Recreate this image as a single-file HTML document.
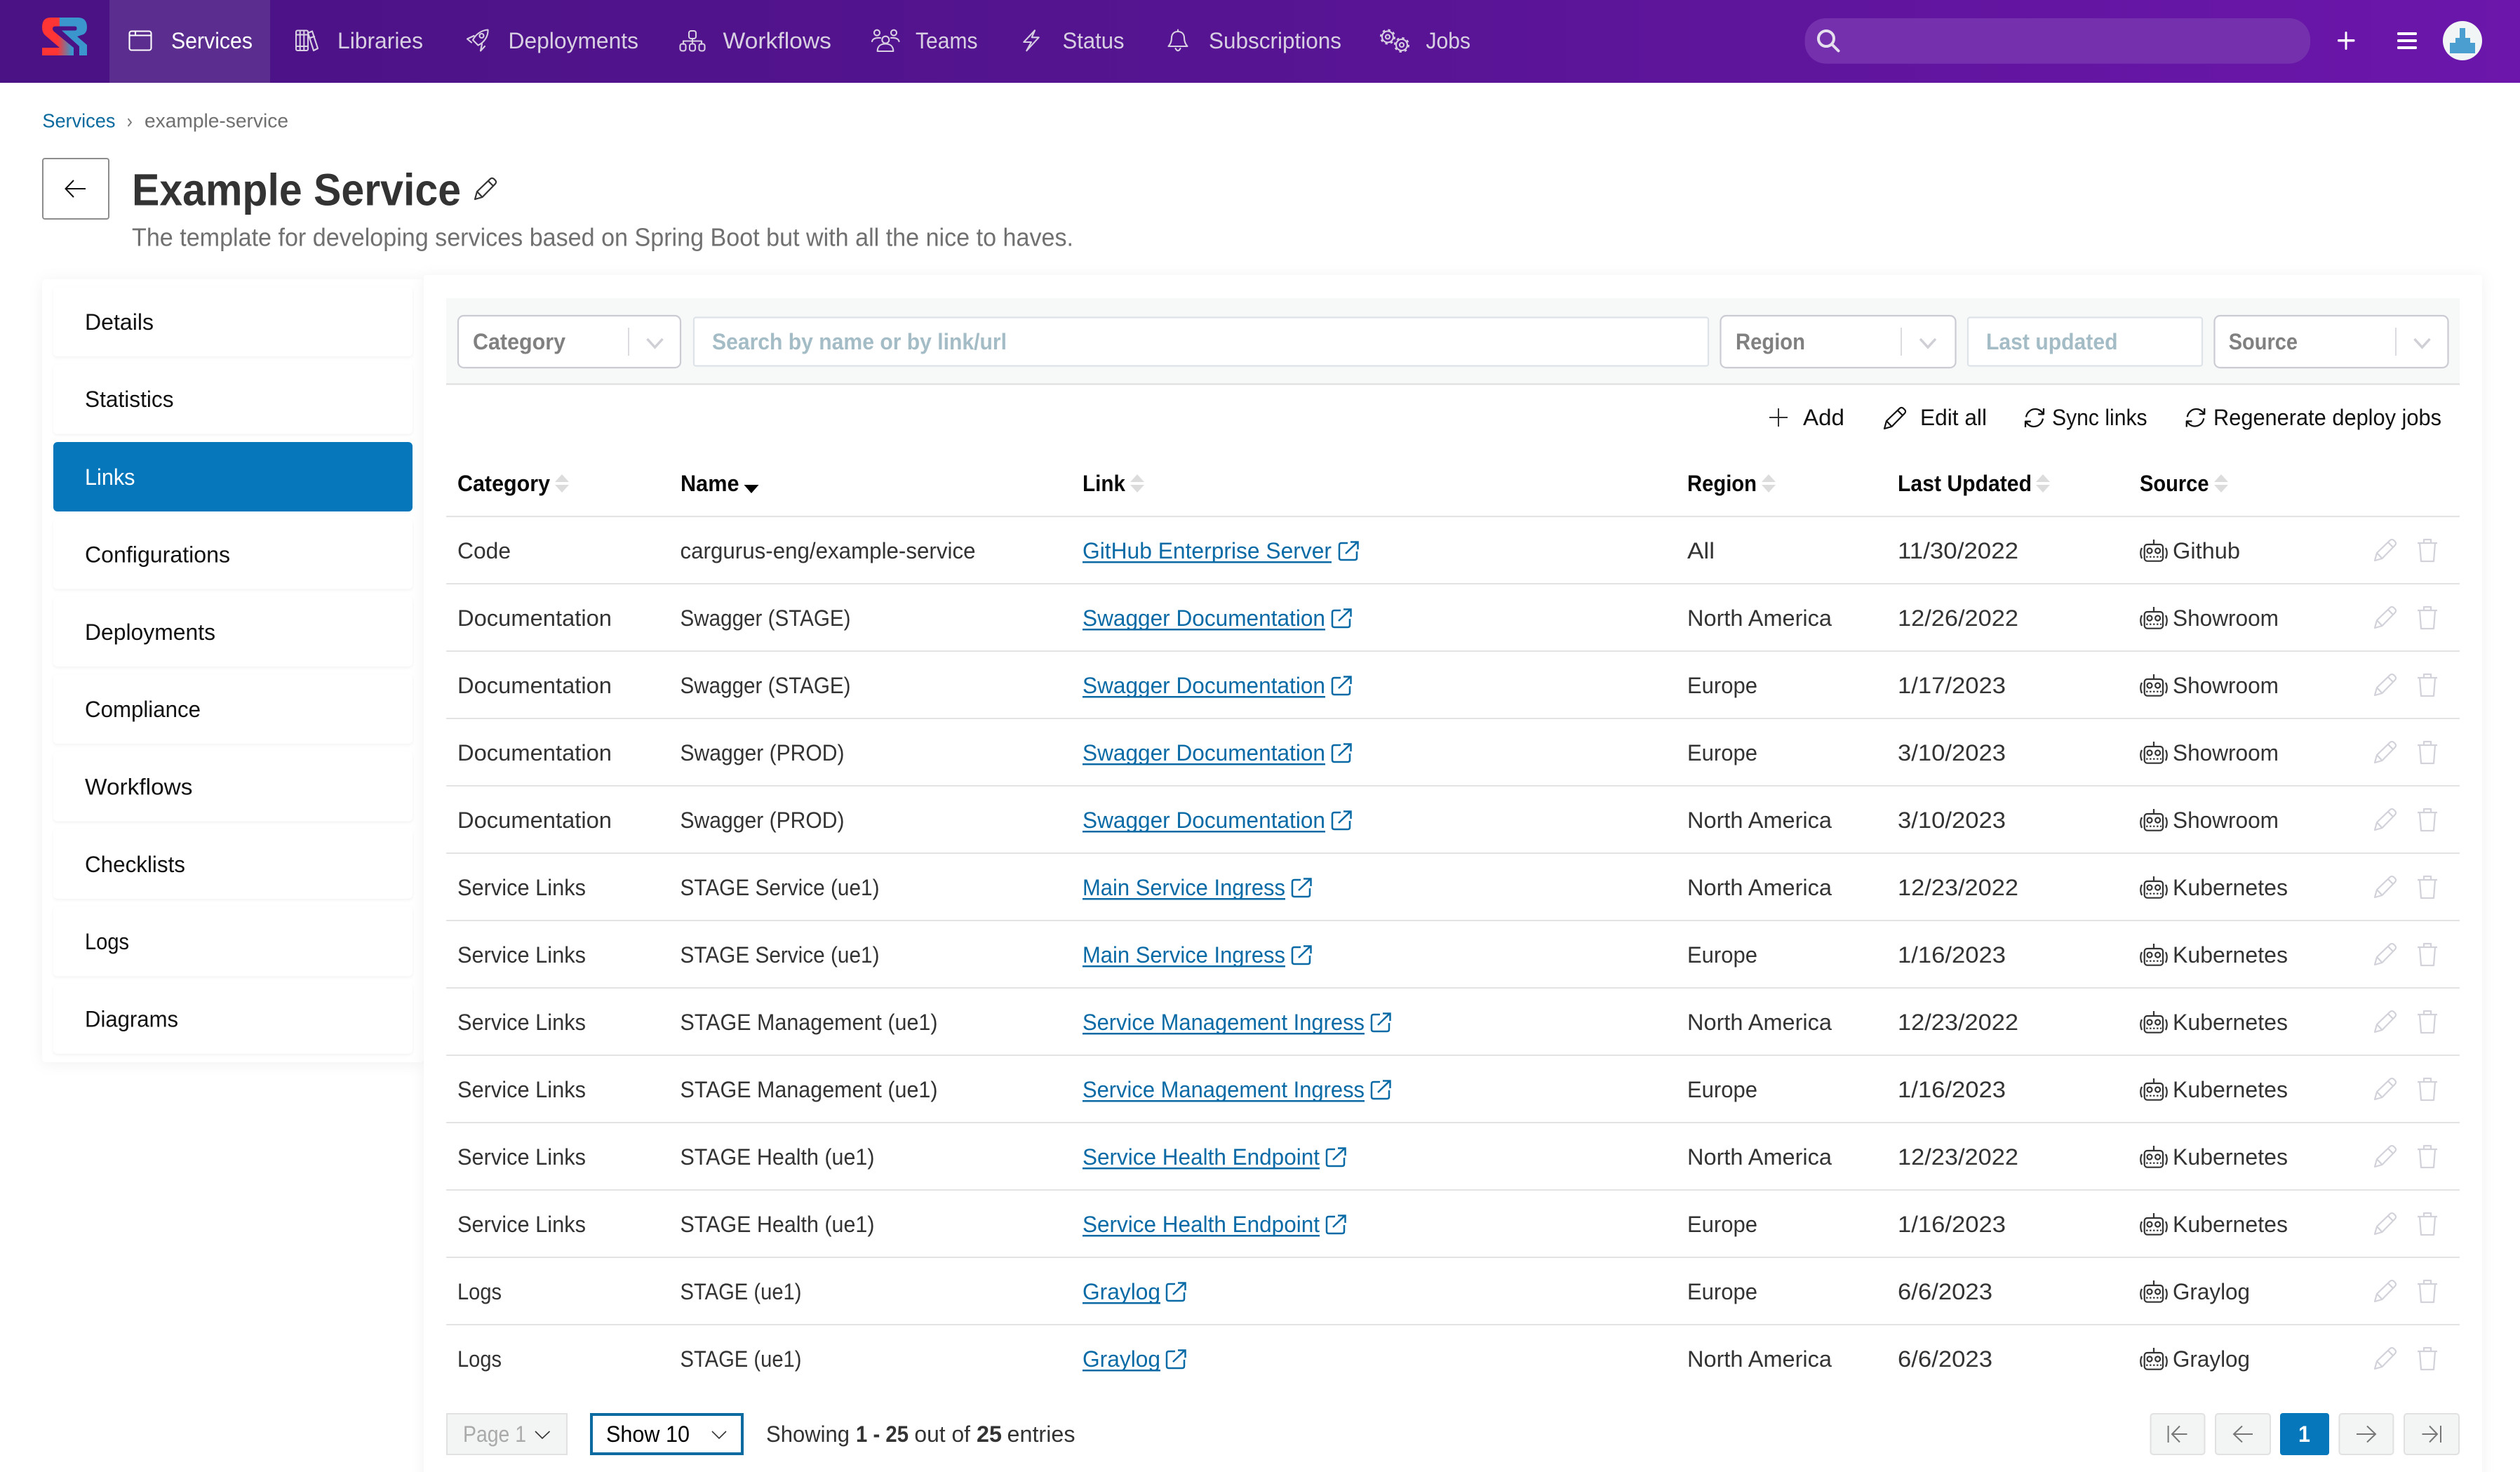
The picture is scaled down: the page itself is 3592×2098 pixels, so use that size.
<!DOCTYPE html>
<html lang="en"><head><meta charset="utf-8"><title>Example Service</title>
<style>
html,body{margin:0;padding:0;background:#fff;width:3592px;height:2098px;overflow:hidden}
svg{display:block}
text{font-family:"Liberation Sans",sans-serif;font-size:32px;fill:#333;white-space:pre}
.nav{fill:#d8d0e2}
.b{font-weight:700}
.hd{font-weight:700;fill:#0a0a0a}
.side{fill:#111}
.lnk{fill:#0a6aa6}
.f{font-weight:700;fill:#808080}
.ph{font-weight:700;fill:#a3bcc6}
.tb{fill:#111}
.i{fill:none;stroke:#d8d0e2;stroke-width:2.1;stroke-linecap:round;stroke-linejoin:round}
svg g[transform] text,.side,.tb,.sl{transform:translateY(-1px)}
</style></head><body>
<svg xmlns="http://www.w3.org/2000/svg" width="3592" height="2098" viewBox="0 0 3592 2098">
<defs>
<linearGradient id="hg" x1="0" x2="1" y1="0" y2="0"><stop offset="0" stop-color="#4a1284"/><stop offset=".5" stop-color="#561492"/><stop offset="1" stop-color="#6c16ab"/></linearGradient>
<linearGradient id="lg" gradientUnits="userSpaceOnUse" x1="82" x2="102" y1="0" y2="0"><stop offset="0" stop-color="#ff3434"/><stop offset="1" stop-color="#3a96cc"/></linearGradient>
<filter id="s1" x="-5%" y="-5%" width="110%" height="110%"><feDropShadow dx="0" dy="2" stdDeviation="10" flood-color="#000" flood-opacity=".055"/></filter>
<filter id="s2" x="-5%" y="-20%" width="110%" height="140%"><feDropShadow dx="0" dy="2" stdDeviation="2" flood-color="#000" flood-opacity=".05"/></filter>
<symbol id="pen" viewBox="0 0 32 32" overflow="visible"><path fill="none" stroke-width="2.2" stroke-linejoin="round" d="M1 31 L4 20 L23 1.8 C24.5 .6 26.5 .6 28 2 L30 4 C31.4 5.5 31.4 7.5 30 9 L11.5 28 Z M4 20 L11.5 28 M20 5 L27 12"/></symbol>
<symbol id="ref" viewBox="0 0 28 26" overflow="visible"><path fill="none" stroke="#111" stroke-width="2.2" stroke-linejoin="round" d="M2.5 12 C3.5 5 9.5 1 15 1 C20 1 24 4 26 8 M26.500 0 V8 H19 M25.500 14 C24.500 21 18.500 25 13 25 C8 25 4 22 2 18 M1.500 26 V18 H9"/></symbol>
<g id="sort" fill="#dcdcdc"><path d="M10 0 L20 11 H0 Z M0 15 H20 L10 26 Z"/></g>
<g id="chev"><path fill="none" stroke="#cfcfd6" stroke-width="3.500" d="M1 1 L12 13 L23 1"/></g>
<g id="ext"><path fill="none" stroke="#0a6aa6" stroke-width="2.500" stroke-linejoin="round" d="M12 -23 H3 Q0 -23 0 -20 V-2 Q0 1 3 1 H22 Q25 1 25 -2 V-11"/><path fill="none" stroke="#0a6aa6" stroke-width="2.500" d="M9 -8 L26 -24.500 M16 -24.500 H26.500 V-14"/></g>
<g id="act">
<g fill="none" stroke="#333" stroke-width="2.200"><rect x="3056.700" y="-21" width="26.300" height="23.700" rx="4"/><path d="M3070 -28 V-21"/><circle cx="3064" cy="-12" r="3.500"/><circle cx="3075.600" cy="-12" r="3.500"/><path d="M3059 -3.300 H3081" stroke-dasharray="2.500 2.500"/><path d="M3053 -16 Q3049.500 -9 3053 -1 M3087 -16 Q3090.500 -9 3087 -1"/></g>
<use href="#pen" x="3384" y="-29" width="32" height="32" stroke="#d2d2da"/>
<path fill="none" stroke="#d2d2da" stroke-width="2.200" stroke-linejoin="round" d="M3446 -23 H3474 M3455 -23 V-28 H3465 V-23 M3449 -23 L3451 3 H3469 L3471 -23"/>
</g>
</defs>

<rect width="3592" height="2098" fill="#fff"/>
<!-- header -->
<rect width="3592" height="118" fill="url(#hg)"/>
<rect x="156" width="229" height="118" fill="#5b2d8e"/>
<path fill="url(#lg)" d="M72 25 H100 V37.500 H79 Q75 37.500 75 41 Q75 43 77 45 L105 68 V79 H60 V68 H85 L64 50 Q60 46 60 39 Q60 25 72 25 Z"/>
<path fill="#3a96cc" d="M100 25 H111 Q124 25 124 39 Q124 46 119 49 L110 52 L124 64 V79 H113 V66 L88 43.500 H107 Q109.500 43.500 109.500 40.500 Q109.500 37.500 107 37.500 H85 V25 Z"/>

<!-- nav -->
<g class="i" style="stroke:#fff"><rect x="184.500" y="44.500" width="31" height="27" rx="3"/><path d="M185 50.500 H215 M193 45 V50.500"/></g>
<text x="244" y="69" fill="#fff" style="fill:#fff" textLength="116" lengthAdjust="spacingAndGlyphs">Services</text>
<g class="i"><rect x="422" y="43.500" width="17" height="28.500" rx="2"/><path d="M427.700 44 V72 M433.300 44 V72 M422 49.500 H439 M422 66 H439 M439 47 L445 44.500 L453 69 L447 72 Z M442 54 L448 52"/></g>
<text class="nav" x="481" y="69" textLength="122" lengthAdjust="spacingAndGlyphs">Libraries</text>
<g class="i"><path d="M695.500 42.500 C686 43 678 49 674 57 L681.500 64.500 C690 60.500 696 52 695.500 42.500 Z M675.500 51 L666 55.500 L672 60.500 M687 62.500 L685 72.500 L691 66"/><circle cx="686.500" cy="51" r="3"/></g>
<text class="nav" x="724.500" y="69" textLength="185.500" lengthAdjust="spacingAndGlyphs">Deployments</text>
<g class="i"><rect x="982" y="44" width="10" height="11" rx="3"/><path d="M987 55 V61 M974 63 V58.500 H1000 V63"/><rect x="969.500" y="62.500" width="8" height="10" rx="3"/><rect x="983" y="62.500" width="8" height="10" rx="3"/><rect x="996.500" y="62.500" width="8" height="10" rx="3"/></g>
<text class="nav" x="1030.500" y="69" textLength="154.500" lengthAdjust="spacingAndGlyphs">Workflows</text>
<g class="i"><circle cx="1250" cy="46.700" r="4"/><circle cx="1274" cy="46.700" r="4"/><circle cx="1262.300" cy="56.700" r="5"/><path d="M1250.700 73 C1250.700 66 1255 62.500 1262 62.500 C1269 62.500 1273.300 66 1273.300 73 Z M1243 59 C1244 55 1248 53.500 1255 54 M1281.500 59 C1280.500 55 1276.500 53.500 1270 54"/></g>
<text class="nav" x="1305" y="69" textLength="88.500" lengthAdjust="spacingAndGlyphs">Teams</text>
<path class="i" d="M1475 43.300 L1459.300 60 H1470 L1463.300 72.300 L1480.700 53.300 H1470.700 Z"/>
<text class="nav" x="1514.500" y="69" textLength="88" lengthAdjust="spacingAndGlyphs">Status</text>
<g class="i"><path d="M1679 42.500 V45 M1665.500 66 C1669 62 1670 57 1670 54 C1670 48 1674 45 1679 45 C1684 45 1688 48 1688 54 C1688 57 1689 62 1692.500 66 Z M1675.500 69 Q1679 75.500 1682.500 69"/></g>
<text class="nav" x="1723" y="69" textLength="189" lengthAdjust="spacingAndGlyphs">Subscriptions</text>
<g class="i"><circle cx="1978" cy="52.500" r="8"/><circle cx="1978" cy="52.500" r="3"/><circle cx="1978" cy="52.500" r="10" stroke-dasharray="3.500 4.360" stroke-linecap="butt"/><circle cx="1998" cy="64" r="8"/><circle cx="1998" cy="64" r="3"/><circle cx="1998" cy="64" r="10" stroke-dasharray="3.500 4.360" stroke-linecap="butt"/></g>
<text class="nav" x="2032.500" y="69" textLength="63.500" lengthAdjust="spacingAndGlyphs">Jobs</text>

<!-- header right -->
<rect x="2572.600" y="26" width="720.400" height="64.700" rx="30" fill="#7530ad"/>
<circle cx="2603" cy="55" r="11" fill="none" stroke="#e6e0ee" stroke-width="4"/>
<path d="M2611 63 L2620.500 72.500" stroke="#e6e0ee" stroke-width="4" stroke-linecap="round"/>
<rect x="3332" y="56" width="24.500" height="3.500" rx="1.500" fill="#fff"/><rect x="3342.500" y="45" width="3" height="26" rx="1.500" fill="#fff"/>
<rect x="3417" y="46" width="28" height="4" rx="1.500" fill="#fff"/><rect x="3417" y="56" width="28" height="4" rx="1.500" fill="#fff"/><rect x="3417" y="66" width="28" height="4" rx="1.500" fill="#fff"/>
<circle cx="3510" cy="58" r="28" fill="#f2f5f5"/>
<path fill="#4b9ed0" d="M3506 40 H3514 V54 H3521 V61 H3528 V76 H3492 V61 H3500 V54 H3506 Z"/>

<!-- breadcrumb / title -->
<text x="60.400" y="181.500" style="font-size:28px;fill:#0a6a9e" textLength="104" lengthAdjust="spacingAndGlyphs">Services</text>
<path d="M182.500 169 L187 174.500 L182.500 180" fill="none" stroke="#777" stroke-width="1.800"/>
<text x="206" y="181.500" style="font-size:28px;fill:#6f6f6f" textLength="205" lengthAdjust="spacingAndGlyphs">example-service</text>
<rect x="61" y="226" width="94" height="86" rx="3" fill="#fff" stroke="#8d8d8d" stroke-width="2"/>
<path d="M93.500 269 H122 M105 257 L93.500 269 L105 281" fill="none" stroke="#111" stroke-width="2"/>
<text class="b" x="188" y="292.500" style="font-size:64px" textLength="469" lengthAdjust="spacingAndGlyphs">Example Service</text>
<use href="#pen" x="676" y="253" width="32" height="32" stroke="#333"/>
<text x="188" y="350.500" style="font-size:36px;fill:#707070" textLength="1342" lengthAdjust="spacingAndGlyphs">The template for developing services based on Spring Boot but with all the nice to haves.</text>

<!-- sidebar -->
<rect x="60" y="398" width="544" height="1116" rx="6" fill="#fff" filter="url(#s1)"/>
<g fill="#fff" filter="url(#s2)">
<rect x="76" y="409" width="512" height="99" rx="6"/><rect x="76" y="519.400" width="512" height="99" rx="6"/>
<rect x="76" y="740.200" width="512" height="99" rx="6"/><rect x="76" y="850.600" width="512" height="99" rx="6"/><rect x="76" y="961" width="512" height="99" rx="6"/><rect x="76" y="1071.400" width="512" height="99" rx="6"/><rect x="76" y="1181.800" width="512" height="99" rx="6"/><rect x="76" y="1292.200" width="512" height="99" rx="6"/><rect x="76" y="1402.600" width="512" height="99" rx="6"/>
</g>
<rect x="76" y="630" width="512" height="99" rx="6" fill="#0577ba"/>
<text class="side" x="121" y="471" textLength="98" lengthAdjust="spacingAndGlyphs">Details</text>
<text class="side" x="121" y="581" textLength="126.500" lengthAdjust="spacingAndGlyphs">Statistics</text>
<text class="sl" x="121" y="692" style="fill:#fff" textLength="71.500" lengthAdjust="spacingAndGlyphs">Links</text>
<text class="side" x="121" y="802.500" textLength="207" lengthAdjust="spacingAndGlyphs">Configurations</text>
<text class="side" x="121" y="913" textLength="186" lengthAdjust="spacingAndGlyphs">Deployments</text>
<text class="side" x="121" y="1023" textLength="165" lengthAdjust="spacingAndGlyphs">Compliance</text>
<text class="side" x="121" y="1133.500" textLength="153.500" lengthAdjust="spacingAndGlyphs">Workflows</text>
<text class="side" x="121" y="1244" textLength="143" lengthAdjust="spacingAndGlyphs">Checklists</text>
<text class="side" x="121" y="1354" textLength="63" lengthAdjust="spacingAndGlyphs">Logs</text>
<text class="side" x="121" y="1464.500" textLength="133" lengthAdjust="spacingAndGlyphs">Diagrams</text>

<!-- panel -->
<rect x="604" y="392" width="2934" height="1760" rx="4" fill="#fff" filter="url(#s1)"/>
<rect x="636" y="425" width="2870" height="123" fill="#f7f8f8"/>
<rect x="636" y="546.500" width="2870" height="2" fill="#dcdcdc"/>
<g fill="#fff" stroke="#cbcbd4" stroke-width="2.200">
<rect x="653" y="450" width="317" height="74" rx="8"/><rect x="2452.500" y="450" width="335" height="74" rx="8"/><rect x="3156.500" y="450" width="333" height="74" rx="8"/>
</g>
<g fill="#fff" stroke="#dde3e8" stroke-width="2.200">
<rect x="989" y="452.500" width="1446" height="69" rx="3"/><rect x="2805" y="452.500" width="334" height="69" rx="3"/>
</g>
<path d="M896 467 V507 M2710 467 V507 M3415 467 V507" stroke="#cfcfd6" stroke-width="1.500"/>
<use href="#chev" x="921.500" y="482"/><use href="#chev" x="2736" y="482"/><use href="#chev" x="3440.500" y="482"/>
<text class="f" x="674" y="498" textLength="132" lengthAdjust="spacingAndGlyphs">Category</text>
<text class="ph" x="1015" y="498" textLength="420" lengthAdjust="spacingAndGlyphs">Search by name or by link/url</text>
<text class="f" x="2474" y="498" textLength="99" lengthAdjust="spacingAndGlyphs">Region</text>
<text class="ph" x="2831" y="498" textLength="187.500" lengthAdjust="spacingAndGlyphs">Last updated</text>
<text class="f" x="3176.700" y="498" textLength="98.300" lengthAdjust="spacingAndGlyphs">Source</text>

<!-- toolbar -->
<path d="M2522 595 H2548 M2535 582 V608" stroke="#333" stroke-width="2"/>
<text class="tb" x="2570" y="607" textLength="59" lengthAdjust="spacingAndGlyphs">Add</text>
<use href="#pen" x="2685" y="580" width="32" height="32" stroke="#111"/>
<text class="tb" x="2737" y="607" textLength="95" lengthAdjust="spacingAndGlyphs">Edit all</text>
<use href="#ref" x="2885" y="582" width="30" height="27"/>
<text class="tb" x="2925" y="607" textLength="135.600" lengthAdjust="spacingAndGlyphs">Sync links</text>
<use href="#ref" x="3115" y="582" width="29" height="26.500"/>
<text class="tb" x="3155" y="607" textLength="325" lengthAdjust="spacingAndGlyphs">Regenerate deploy jobs</text>

<!-- table head -->
<text class="hd" x="652" y="700" textLength="132" lengthAdjust="spacingAndGlyphs">Category</text><use href="#sort" x="791" y="676"/>
<text class="hd" x="970" y="700" textLength="83.500" lengthAdjust="spacingAndGlyphs">Name</text><path d="M1060.500 691 H1081.500 L1071 703 Z" fill="#000"/>
<text class="hd" x="1543" y="700" textLength="61" lengthAdjust="spacingAndGlyphs">Link</text><use href="#sort" x="1611" y="676"/>
<text class="hd" x="2405" y="700" textLength="99" lengthAdjust="spacingAndGlyphs">Region</text><use href="#sort" x="2511" y="676"/>
<text class="hd" x="2705" y="700" textLength="191" lengthAdjust="spacingAndGlyphs">Last Updated</text><use href="#sort" x="2902" y="676"/>
<text class="hd" x="3050" y="700" textLength="98.500" lengthAdjust="spacingAndGlyphs">Source</text><use href="#sort" x="3156" y="676"/>
<g fill="#e4e4e4">
<rect x="636" y="735" width="2870" height="2.200"/><rect x="636" y="831" width="2870" height="2"/><rect x="636" y="927" width="2870" height="2"/><rect x="636" y="1023" width="2870" height="2"/><rect x="636" y="1119" width="2870" height="2"/><rect x="636" y="1215" width="2870" height="2"/><rect x="636" y="1311" width="2870" height="2"/><rect x="636" y="1407" width="2870" height="2"/><rect x="636" y="1503" width="2870" height="2"/><rect x="636" y="1599" width="2870" height="2"/><rect x="636" y="1695" width="2870" height="2"/><rect x="636" y="1791" width="2870" height="2"/><rect x="636" y="1887" width="2870" height="2"/>
</g>

<!-- rows -->
<g transform="translate(0,797)"><use href="#act"/>
<text x="652" textLength="76" lengthAdjust="spacingAndGlyphs">Code</text><text x="969.500" textLength="421" lengthAdjust="spacingAndGlyphs">cargurus-eng/example-service</text>
<text class="lnk" x="1543" textLength="355" lengthAdjust="spacingAndGlyphs">GitHub Enterprise Server</text><rect x="1543" y="3" width="355" height="2.500" fill="#0a6aa6"/><use href="#ext" x="1909"/>
<text x="2405" textLength="39" lengthAdjust="spacingAndGlyphs">All</text><text x="2705" textLength="172" lengthAdjust="spacingAndGlyphs">11/30/2022</text><text x="3097" textLength="96" lengthAdjust="spacingAndGlyphs">Github</text></g>

<g transform="translate(0,893)"><use href="#act"/>
<text x="652" textLength="220" lengthAdjust="spacingAndGlyphs">Documentation</text><text x="969.500" textLength="243" lengthAdjust="spacingAndGlyphs">Swagger (STAGE)</text>
<text class="lnk" x="1543" textLength="346" lengthAdjust="spacingAndGlyphs">Swagger Documentation</text><rect x="1543" y="3" width="346" height="2.500" fill="#0a6aa6"/><use href="#ext" x="1899"/>
<text x="2405" textLength="206" lengthAdjust="spacingAndGlyphs">North America</text><text x="2705" textLength="172" lengthAdjust="spacingAndGlyphs">12/26/2022</text><text x="3097" textLength="151" lengthAdjust="spacingAndGlyphs">Showroom</text></g>

<g transform="translate(0,989)"><use href="#act"/>
<text x="652" textLength="220" lengthAdjust="spacingAndGlyphs">Documentation</text><text x="969.500" textLength="243" lengthAdjust="spacingAndGlyphs">Swagger (STAGE)</text>
<text class="lnk" x="1543" textLength="346" lengthAdjust="spacingAndGlyphs">Swagger Documentation</text><rect x="1543" y="3" width="346" height="2.500" fill="#0a6aa6"/><use href="#ext" x="1899"/>
<text x="2405" textLength="100" lengthAdjust="spacingAndGlyphs">Europe</text><text x="2705" textLength="154" lengthAdjust="spacingAndGlyphs">1/17/2023</text><text x="3097" textLength="151" lengthAdjust="spacingAndGlyphs">Showroom</text></g>

<g transform="translate(0,1085)"><use href="#act"/>
<text x="652" textLength="220" lengthAdjust="spacingAndGlyphs">Documentation</text><text x="969.500" textLength="234" lengthAdjust="spacingAndGlyphs">Swagger (PROD)</text>
<text class="lnk" x="1543" textLength="346" lengthAdjust="spacingAndGlyphs">Swagger Documentation</text><rect x="1543" y="3" width="346" height="2.500" fill="#0a6aa6"/><use href="#ext" x="1899"/>
<text x="2405" textLength="100" lengthAdjust="spacingAndGlyphs">Europe</text><text x="2705" textLength="154" lengthAdjust="spacingAndGlyphs">3/10/2023</text><text x="3097" textLength="151" lengthAdjust="spacingAndGlyphs">Showroom</text></g>

<g transform="translate(0,1181)"><use href="#act"/>
<text x="652" textLength="220" lengthAdjust="spacingAndGlyphs">Documentation</text><text x="969.500" textLength="234" lengthAdjust="spacingAndGlyphs">Swagger (PROD)</text>
<text class="lnk" x="1543" textLength="346" lengthAdjust="spacingAndGlyphs">Swagger Documentation</text><rect x="1543" y="3" width="346" height="2.500" fill="#0a6aa6"/><use href="#ext" x="1899"/>
<text x="2405" textLength="206" lengthAdjust="spacingAndGlyphs">North America</text><text x="2705" textLength="154" lengthAdjust="spacingAndGlyphs">3/10/2023</text><text x="3097" textLength="151" lengthAdjust="spacingAndGlyphs">Showroom</text></g>

<g transform="translate(0,1277)"><use href="#act"/>
<text x="652" textLength="183" lengthAdjust="spacingAndGlyphs">Service Links</text><text x="969.500" textLength="284" lengthAdjust="spacingAndGlyphs">STAGE Service (ue1)</text>
<text class="lnk" x="1543" textLength="289" lengthAdjust="spacingAndGlyphs">Main Service Ingress</text><rect x="1543" y="3" width="289" height="2.500" fill="#0a6aa6"/><use href="#ext" x="1842"/>
<text x="2405" textLength="206" lengthAdjust="spacingAndGlyphs">North America</text><text x="2705" textLength="172" lengthAdjust="spacingAndGlyphs">12/23/2022</text><text x="3097" textLength="164" lengthAdjust="spacingAndGlyphs">Kubernetes</text></g>

<g transform="translate(0,1373)"><use href="#act"/>
<text x="652" textLength="183" lengthAdjust="spacingAndGlyphs">Service Links</text><text x="969.500" textLength="284" lengthAdjust="spacingAndGlyphs">STAGE Service (ue1)</text>
<text class="lnk" x="1543" textLength="289" lengthAdjust="spacingAndGlyphs">Main Service Ingress</text><rect x="1543" y="3" width="289" height="2.500" fill="#0a6aa6"/><use href="#ext" x="1842"/>
<text x="2405" textLength="100" lengthAdjust="spacingAndGlyphs">Europe</text><text x="2705" textLength="154" lengthAdjust="spacingAndGlyphs">1/16/2023</text><text x="3097" textLength="164" lengthAdjust="spacingAndGlyphs">Kubernetes</text></g>

<g transform="translate(0,1469)"><use href="#act"/>
<text x="652" textLength="183" lengthAdjust="spacingAndGlyphs">Service Links</text><text x="969.500" textLength="367" lengthAdjust="spacingAndGlyphs">STAGE Management (ue1)</text>
<text class="lnk" x="1543" textLength="402" lengthAdjust="spacingAndGlyphs">Service Management Ingress</text><rect x="1543" y="3" width="402" height="2.500" fill="#0a6aa6"/><use href="#ext" x="1955"/>
<text x="2405" textLength="206" lengthAdjust="spacingAndGlyphs">North America</text><text x="2705" textLength="172" lengthAdjust="spacingAndGlyphs">12/23/2022</text><text x="3097" textLength="164" lengthAdjust="spacingAndGlyphs">Kubernetes</text></g>

<g transform="translate(0,1565)"><use href="#act"/>
<text x="652" textLength="183" lengthAdjust="spacingAndGlyphs">Service Links</text><text x="969.500" textLength="367" lengthAdjust="spacingAndGlyphs">STAGE Management (ue1)</text>
<text class="lnk" x="1543" textLength="402" lengthAdjust="spacingAndGlyphs">Service Management Ingress</text><rect x="1543" y="3" width="402" height="2.500" fill="#0a6aa6"/><use href="#ext" x="1955"/>
<text x="2405" textLength="100" lengthAdjust="spacingAndGlyphs">Europe</text><text x="2705" textLength="154" lengthAdjust="spacingAndGlyphs">1/16/2023</text><text x="3097" textLength="164" lengthAdjust="spacingAndGlyphs">Kubernetes</text></g>

<g transform="translate(0,1661)"><use href="#act"/>
<text x="652" textLength="183" lengthAdjust="spacingAndGlyphs">Service Links</text><text x="969.500" textLength="277" lengthAdjust="spacingAndGlyphs">STAGE Health (ue1)</text>
<text class="lnk" x="1543" textLength="338" lengthAdjust="spacingAndGlyphs">Service Health Endpoint</text><rect x="1543" y="3" width="338" height="2.500" fill="#0a6aa6"/><use href="#ext" x="1891"/>
<text x="2405" textLength="206" lengthAdjust="spacingAndGlyphs">North America</text><text x="2705" textLength="172" lengthAdjust="spacingAndGlyphs">12/23/2022</text><text x="3097" textLength="164" lengthAdjust="spacingAndGlyphs">Kubernetes</text></g>

<g transform="translate(0,1757)"><use href="#act"/>
<text x="652" textLength="183" lengthAdjust="spacingAndGlyphs">Service Links</text><text x="969.500" textLength="277" lengthAdjust="spacingAndGlyphs">STAGE Health (ue1)</text>
<text class="lnk" x="1543" textLength="338" lengthAdjust="spacingAndGlyphs">Service Health Endpoint</text><rect x="1543" y="3" width="338" height="2.500" fill="#0a6aa6"/><use href="#ext" x="1891"/>
<text x="2405" textLength="100" lengthAdjust="spacingAndGlyphs">Europe</text><text x="2705" textLength="154" lengthAdjust="spacingAndGlyphs">1/16/2023</text><text x="3097" textLength="164" lengthAdjust="spacingAndGlyphs">Kubernetes</text></g>

<g transform="translate(0,1853)"><use href="#act"/>
<text x="652" textLength="63" lengthAdjust="spacingAndGlyphs">Logs</text><text x="969.500" textLength="173" lengthAdjust="spacingAndGlyphs">STAGE (ue1)</text>
<text class="lnk" x="1543" textLength="111" lengthAdjust="spacingAndGlyphs">Graylog</text><rect x="1543" y="3" width="111" height="2.500" fill="#0a6aa6"/><use href="#ext" x="1663"/>
<text x="2405" textLength="100" lengthAdjust="spacingAndGlyphs">Europe</text><text x="2705" textLength="135" lengthAdjust="spacingAndGlyphs">6/6/2023</text><text x="3097" textLength="110" lengthAdjust="spacingAndGlyphs">Graylog</text></g>

<g transform="translate(0,1949)"><use href="#act"/>
<text x="652" textLength="63" lengthAdjust="spacingAndGlyphs">Logs</text><text x="969.500" textLength="173" lengthAdjust="spacingAndGlyphs">STAGE (ue1)</text>
<text class="lnk" x="1543" textLength="111" lengthAdjust="spacingAndGlyphs">Graylog</text><rect x="1543" y="3" width="111" height="2.500" fill="#0a6aa6"/><use href="#ext" x="1663"/>
<text x="2405" textLength="206" lengthAdjust="spacingAndGlyphs">North America</text><text x="2705" textLength="135" lengthAdjust="spacingAndGlyphs">6/6/2023</text><text x="3097" textLength="110" lengthAdjust="spacingAndGlyphs">Graylog</text></g>

<!-- footer -->
<rect x="637" y="2015" width="171" height="58" fill="#f3f4f4" stroke="#e1e1e1" stroke-width="2"/>
<text class="sl" x="660" y="2056" style="fill:#aaa" textLength="90" lengthAdjust="spacingAndGlyphs">Page 1</text>
<path d="M763 2040 L773 2050 L783.500 2040" fill="none" stroke="#333" stroke-width="1.600"/>
<rect x="843" y="2016" width="215" height="56" fill="#fff" stroke="#0b6a9f" stroke-width="4"/>
<text class="sl" x="864" y="2056" style="fill:#000" textLength="119" lengthAdjust="spacingAndGlyphs">Show 10</text>
<path d="M1015 2040 L1025 2050 L1035 2040" fill="none" stroke="#333" stroke-width="1.600"/>
<text class="sl" x="1092" y="2056" textLength="119" lengthAdjust="spacingAndGlyphs">Showing</text>
<text class="b sl" x="1220" y="2056" textLength="75" lengthAdjust="spacingAndGlyphs">1 - 25</text>
<text class="sl" x="1303.400" y="2056" textLength="79.600" lengthAdjust="spacingAndGlyphs">out of</text>
<text class="b sl" x="1392" y="2056" textLength="36" lengthAdjust="spacingAndGlyphs">25</text>
<text class="sl" x="1435.500" y="2056" textLength="97" lengthAdjust="spacingAndGlyphs">entries</text>
<g fill="#f3f4f4" stroke="#e1e1e1" stroke-width="2">
<rect x="3065.500" y="2015" width="77" height="58" rx="4"/><rect x="3158" y="2015" width="78" height="58" rx="4"/><rect x="3334.400" y="2015" width="77" height="58" rx="4"/><rect x="3427" y="2015" width="78" height="58" rx="4"/>
</g>
<rect x="3250" y="2014" width="70" height="60" rx="4" fill="#0577ba"/>
<text class="b" x="3276" y="2055" style="fill:#fff" textLength="17" lengthAdjust="spacingAndGlyphs">1</text>
<g fill="none" stroke="#777" stroke-width="2">
<path d="M3090.600 2032 V2056 M3117.500 2044 H3096 M3107 2032.500 L3096 2044 L3107 2055.500"/>
<path d="M3211 2044 H3184 M3196 2032.500 L3184 2044 L3196 2055.500"/>
<path d="M3359 2044 H3386 M3374 2032.500 L3386 2044 L3374 2055.500"/>
<path d="M3479 2032 V2056 M3452.500 2044 H3474 M3463 2032.500 L3474 2044 L3463 2055.500"/>
</g>
</svg>
</body></html>
